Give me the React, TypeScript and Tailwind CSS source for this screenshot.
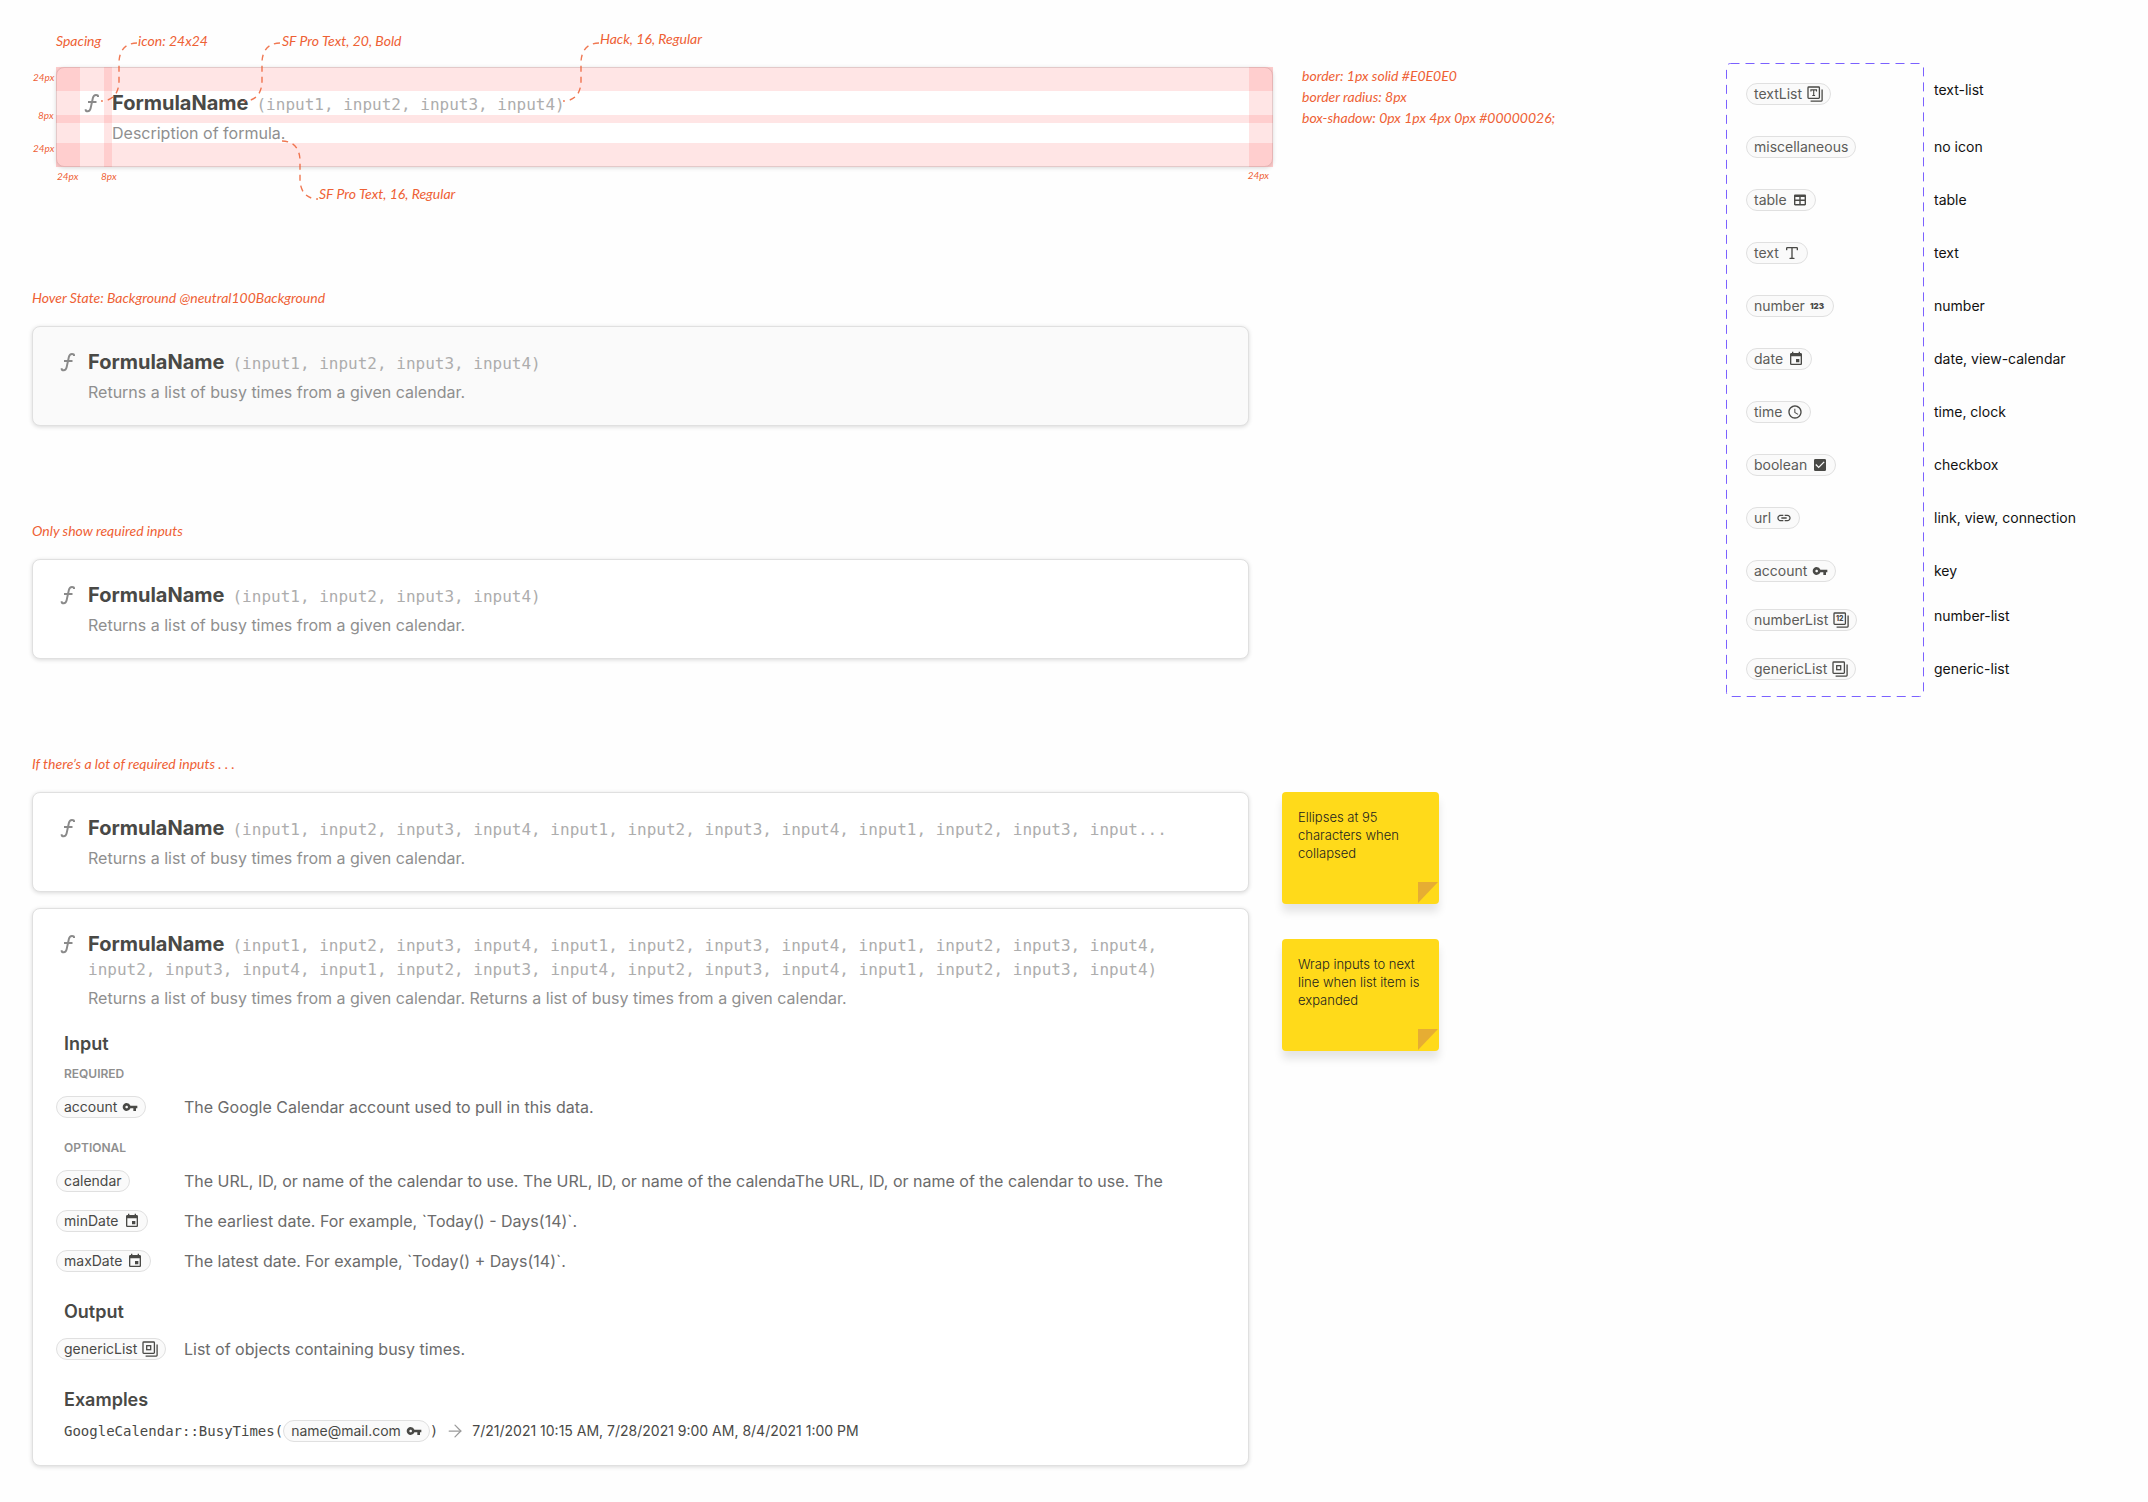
import type { ReactNode } from 'react';
import clsx from 'clsx';
import { ArrowRight, Type } from 'lucide-react';
import { MdCheckBox, MdEvent, MdLink, MdSchedule, MdVpnKey } from 'react-icons/md';

const inputs = (...groups: number[][]) =>
  groups.map((group) => group.map((n) => `input${n}`).join(', ')).join(', ');

const ALL = [1, 2, 3, 4];
const SHORT_INPUTS = `(${inputs(ALL)})`;
const CUT_INPUTS = `(${inputs(ALL, ALL, [1, 2, 3])}, input...`;
const LONG_INPUTS = `(${inputs(ALL, ALL, ALL, [2, 3, 4], ALL, [2, 3, 4], ALL)})`;
const BUSY_TIMES = 'Returns a list of busy times from a given calendar.';

function FormulaIcon() {
  return (
    <svg className="w-6 h-6 shrink-0 text-[#8a8a8a]" viewBox="0 0 24 24" fill="none" stroke="currentColor" strokeWidth="2">
      <path d="M18 6V5.2C18 4.3 17.2 3.9 16 3.9c-1.9 0-2.7 1.2-3.1 3l-2.3 10.5c-.4 1.8-1.2 2.9-2.9 2.9-1.3 0-2-.4-2-1.4v-.6" />
      <path d="M8 11h8.5" />
    </svg>
  );
}

function TableIcon() {
  return (
    <svg className="w-4 h-4" viewBox="0 0 16 16" fill="currentColor" fillRule="evenodd">
      <path d="M3.2 2.5h9.6c.7 0 1.2.5 1.2 1.2v8.6c0 .7-.5 1.2-1.2 1.2H3.2c-.7 0-1.2-.5-1.2-1.2V3.7c0-.7.5-1.2 1.2-1.2zM3.4 5v2.6h3.9V5zm5.3 0v2.6h3.9V5zM3.4 9v3.1h3.9V9zm5.3 0v3.1h3.9V9z" />
    </svg>
  );
}

function NumberIcon() {
  return (
    <svg className="w-4 h-4 overflow-visible" viewBox="0 0 16 16">
      <text x="7" y="11" textAnchor="middle" fontFamily="Inter, sans-serif" fontSize="8" fontWeight="900" fill="currentColor">123</text>
    </svg>
  );
}

// Stacked frame shared by every "list" type
function ListIcon({ children }: { children: ReactNode }) {
  return (
    <svg className="w-4 h-4" viewBox="0 0 16 16" fill="none" stroke="currentColor" strokeWidth="1.3">
      <rect x="1" y="1" width="11.4" height="11.4" rx="0.8" />
      <path d="M15.1 3.6v10.7c0 .5-.3.8-.8.8H3.6" />
      {children}
    </svg>
  );
}

const TextListIcon = () => (
  <ListIcon>
    <path d="M3.9 5.4V3.9h5.6v1.5M6.7 3.9v5.6M5.3 9.5h2.8" strokeWidth="1.1" />
  </ListIcon>
);

const NumberListIcon = () => (
  <ListIcon>
    <text x="6.7" y="9.2" textAnchor="middle" fontFamily="Inter, sans-serif" fontSize="7" fontWeight="800" fill="currentColor" stroke="none">12</text>
  </ListIcon>
);

const GenericListIcon = () => (
  <ListIcon>
    <rect x="4.7" y="4.7" width="4" height="4" />
  </ListIcon>
);

function Chip({ label, icon, dark }: { label: string; icon?: ReactNode; dark?: boolean }) {
  return (
    <span className={clsx('inline-flex items-center gap-[5px] h-[22px] px-[7px] rounded-full border border-[#e0e0e0] bg-[#fafafa] text-sm leading-5 whitespace-nowrap', dark ? 'text-[#494946]' : 'text-[#5c5c59]')}>
      {label}
      {icon && <span className="text-[#494946]">{icon}</span>}
    </span>
  );
}

function Note({ children, className }: { children: ReactNode; className?: string }) {
  return <p className={clsx("font-['Lato',sans-serif] italic text-sm leading-[18px] text-[#ee6135] whitespace-nowrap", className)}>{children}</p>;
}

function Measure({ children, className }: { children: ReactNode; className: string }) {
  return <span className={clsx("absolute font-['Lato',sans-serif] italic text-[10px] leading-4 text-[#ee6135]", className)}>{children}</span>;
}

function FormulaCard({ args, description, hovered, children }: { args: string; description: string; hovered?: boolean; children?: ReactNode }) {
  return (
    <article className={clsx('w-full max-w-[1217px] p-[23px] rounded-lg border border-[#e0e0e0] shadow-[0px_1px_4px_0px_#00000026]', hovered ? 'bg-[#fafafa]' : 'bg-white')}>
      <div className="flex gap-2">
        <FormulaIcon />
        <div className="min-w-0">
          <h2 className="text-xl leading-6 font-bold text-[#494946]">
            <span className="mr-2">FormulaName</span>
            <span className="font-['DejaVu_Sans_Mono',monospace] text-base leading-none font-normal text-[#adadad]">{args}</span>
          </h2>
          <p className="mt-2 text-base leading-5 text-[#8f8f8f]">{description}</p>
        </div>
      </div>
      {children}
    </article>
  );
}

function Param({ chip, children }: { chip: ReactNode; children: ReactNode }) {
  return (
    <div className="flex items-center">
      <dt className="flex w-32 shrink-0">{chip}</dt>
      <dd className="text-base leading-[22px] text-[#6b6b6b]">{children}</dd>
    </div>
  );
}

function Sticky({ children }: { children: ReactNode }) {
  return (
    <div className="relative w-[157px] h-28 p-4 rounded bg-[#ffda1a] text-[13px] leading-[18px] font-light text-[#22221f] shadow-[0_8px_8px_0_#0000001a]">
      {children}
      <svg className="absolute right-px bottom-px w-5 h-[21px]" viewBox="0 0 20 21" fill="#e6ad33">
        <path d="M0 0h20L0 21z" />
      </svg>
    </div>
  );
}

function SpecSection() {
  return (
    <section className="relative flex items-start gap-[29px] pl-14 pt-[67px] h-[225px]">
      <div className="relative w-full max-w-[1217px]">
        <FormulaCard args={SHORT_INPUTS} description="Description of formula." />
        <div className="absolute inset-x-0 top-0 h-6 bg-[#ff0000]/10" />
        <div className="absolute inset-x-0 top-12 h-2 bg-[#ff0000]/10" />
        <div className="absolute inset-x-0 bottom-0 h-6 bg-[#ff0000]/10" />
        <div className="absolute inset-y-0 left-0 w-6 bg-[#ff0000]/10" />
        <div className="absolute inset-y-0 left-12 w-2 bg-[#ff0000]/10" />
        <div className="absolute inset-y-0 right-0 w-6 bg-[#ff0000]/10" />
        <Measure className="right-1 top-full">24px</Measure>
      </div>
      <div className="flex flex-col gap-[3px]">
        <Note>border: 1px solid #E0E0E0</Note>
        <Note>border radius: 8px</Note>
        <Note>box-shadow: 0px 1px 4px 0px #00000026;</Note>
      </div>

      {/* Callouts */}
      <svg className="absolute left-0 top-0 w-[640px] h-[220px] pointer-events-none" viewBox="0 0 640 220" fill="none" stroke="#ee6135" strokeWidth="1.4" strokeDasharray="6 5" opacity="0.85">
        <path d="M137 43c-12 0-18 8-18 20v18c0 12-6 20-18 20" />
        <path d="M280 43c-12 0-18 8-18 20v18c0 12-6 20-18 20" />
        <path d="M599 43c-12 0-18 8-18 20v18c0 12-6 20-18 20" />
        <path d="M282 141c12 0 18 8 18 20v18c0 12 6 20 18 20" />
      </svg>
      <Note className="absolute left-14 top-8">Spacing</Note>
      <Note className="absolute left-[138px] top-8">icon: 24x24</Note>
      <Note className="absolute left-[282px] top-8">SF Pro Text, 20, Bold</Note>
      <Note className="absolute left-[600px] top-[30px]">Hack, 16, Regular</Note>
      <Note className="absolute left-[319px] top-[185px]">SF Pro Text, 16, Regular</Note>
      <Measure className="left-[33px] top-[69px]">24px</Measure>
      <Measure className="left-[38px] top-[107px]">8px</Measure>
      <Measure className="left-[33px] top-[140px]">24px</Measure>
      <Measure className="left-[57px] top-[168px]">24px</Measure>
      <Measure className="left-[101px] top-[168px]">8px</Measure>
    </section>
  );
}

function Section({ title, children }: { title: string; children: ReactNode }) {
  return (
    <section className="flex flex-col gap-[19px] px-8 py-8">
      <Note>{title}</Note>
      {children}
    </section>
  );
}

type TypeRow = { name: string; label: string; icon?: ReactNode; raised?: boolean };

const BASE_TYPES: TypeRow[] = [
  { name: 'textList', label: 'text-list', icon: <TextListIcon />, raised: true },
  { name: 'miscellaneous', label: 'no icon' },
  { name: 'table', label: 'table', icon: <TableIcon /> },
  { name: 'text', label: 'text', icon: <Type size={16} strokeWidth={2} /> },
  { name: 'number', label: 'number', icon: <NumberIcon /> },
  { name: 'date', label: 'date, view-calendar', icon: <MdEvent size={16} /> },
  { name: 'time', label: 'time, clock', icon: <MdSchedule size={16} /> },
  { name: 'boolean', label: 'checkbox', icon: <MdCheckBox size={16} /> },
  { name: 'url', label: 'link, view, connection', icon: <MdLink size={16} /> },
  { name: 'account', label: 'key', icon: <MdVpnKey size={16} /> },
];

const LIST_TYPES: TypeRow[] = [
  { name: 'numberList', label: 'number-list', icon: <NumberListIcon />, raised: true },
  { name: 'genericList', label: 'generic-list', icon: <GenericListIcon /> },
];

function TypeList({ rows, className }: { rows: TypeRow[]; className: string }) {
  return (
    <ul className={clsx('flex flex-col', className)}>
      {rows.map((row) => (
        <li key={row.name} className="flex items-center h-[22px]">
          <span className="flex w-[188px]">
            <Chip label={row.name} icon={row.icon} />
          </span>
          <span className={clsx('text-sm leading-5 text-[#111111]', row.raised && 'pb-2')}>{row.label}</span>
        </li>
      ))}
    </ul>
  );
}

export default function App() {
  return (
    <div className="flex items-start min-h-screen bg-[#fefefe] font-['Inter',sans-serif]">
      <main className="flex-1 min-w-0 flex flex-col gap-8">
        <SpecSection />

        <Section title="Hover State: Background @neutral100Background">
          <FormulaCard args={SHORT_INPUTS} description={BUSY_TIMES} hovered />
        </Section>

        <Section title="Only show required inputs">
          <FormulaCard args={SHORT_INPUTS} description={BUSY_TIMES} />
        </Section>

        <Section title="If there’s a lot of required inputs . . .">
          <div className="flex items-start gap-[33px]">
            <div className="w-full max-w-[1217px] flex flex-col gap-4">
              <FormulaCard args={CUT_INPUTS} description={BUSY_TIMES} />
              <FormulaCard args={LONG_INPUTS} description={`${BUSY_TIMES} ${BUSY_TIMES}`}>
                <h3 className="mt-6 pl-2 text-lg leading-6 font-semibold text-[#494946]">Input</h3>
                <h4 className="mt-2 pl-2 text-xs leading-5 font-semibold text-[#8f8f8f]">REQUIRED</h4>
                <dl className="mt-3">
                  <Param chip={<Chip label="account" icon={<MdVpnKey size={16} />} dark />}>
                    The Google Calendar account used to pull in this data.
                  </Param>
                </dl>
                <h4 className="mt-5 pl-2 text-xs leading-5 font-semibold text-[#8f8f8f]">OPTIONAL</h4>
                <dl className="mt-3 flex flex-col gap-[18px]">
                  <Param chip={<Chip label="calendar" dark />}>
                    The URL, ID, or name of the calendar to use. The URL, ID, or name of the calendaThe URL, ID, or name of the calendar to use. The
                  </Param>
                  <Param chip={<Chip label="minDate" icon={<MdEvent size={16} />} dark />}>
                    The earliest date. For example, `Today() - Days(14)`.
                  </Param>
                  <Param chip={<Chip label="maxDate" icon={<MdEvent size={16} />} dark />}>
                    The latest date. For example, `Today() + Days(14)`.
                  </Param>
                </dl>
                <h3 className="mt-7 pl-2 text-lg leading-6 font-semibold text-[#494946]">Output</h3>
                <dl className="mt-3.5">
                  <Param chip={<Chip label="genericList" icon={<GenericListIcon />} dark />}>
                    List of objects containing busy times.
                  </Param>
                </dl>
                <h3 className="mt-7 pl-2 text-lg leading-6 font-semibold text-[#494946]">Examples</h3>
                <div className="mt-2 pl-2 flex items-center text-sm leading-5 text-[#494946]">
                  <code className="font-['DejaVu_Sans_Mono',monospace]">GoogleCalendar::BusyTimes(</code>
                  <Chip label="name@mail.com" icon={<MdVpnKey size={16} />} dark />
                  <code className="font-['DejaVu_Sans_Mono',monospace]">)</code>
                  <ArrowRight className="mx-[7px] text-[#9a9a9a]" size={20} strokeWidth={1.5} />
                  <span>7/21/2021 10:15 AM, 7/28/2021 9:00 AM, 8/4/2021 1:00 PM</span>
                </div>
              </FormulaCard>
            </div>
            <div className="flex flex-col gap-[35px]">
              <Sticky>Ellipses at 95 characters when collapsed</Sticky>
              <Sticky>Wrap inputs to next line when list item is expanded</Sticky>
            </div>
          </div>
        </Section>
      </main>

      <aside className="relative w-[422px] shrink-0 mt-[63px] pt-5 pb-4 pl-5 flex flex-col gap-[27px]">
        <svg className="absolute left-0 top-0 w-[198px] h-full overflow-visible pointer-events-none" fill="none">
          <rect x="0.5" y="0.5" width="197" height="100%" rx="4" stroke="#7b61ff" strokeDasharray="9 6" />
        </svg>
        <TypeList rows={BASE_TYPES} className="gap-[31px]" />
        <TypeList rows={LIST_TYPES} className="gap-[27px]" />
      </aside>
    </div>
  );
}
